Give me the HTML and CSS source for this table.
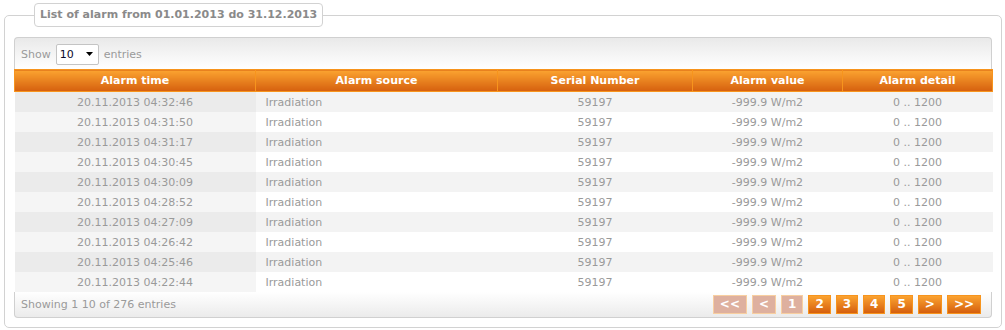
FILE: index.html
```html
<!DOCTYPE html>
<html>
<head>
<meta charset="utf-8">
<link rel="stylesheet" href="styles.css">
</head>
<body>
<div class="page">
<fieldset class="panel">
  <legend class="panel-title">List of alarm from 01.01.2013 do 31.12.2013</legend>
  <div class="dt">
    <div class="dt-top">
      <span class="lbl">Show</span>
      <span class="select"><span class="select-val">10</span><svg class="caret" width="7" height="4" viewBox="0 0 7 4"><path d="M0 0H7L3.5 4Z" fill="#000"/></svg></span>
      <span class="lbl">entries</span>
    </div>
    <table class="grid">
      <colgroup>
        <col class="c1"><col class="c2"><col class="c3"><col class="c4"><col class="c5">
      </colgroup>
      <thead>
        <tr><th>Alarm time</th><th>Alarm source</th><th>Serial Number</th><th>Alarm value</th><th>Alarm detail</th></tr>
      </thead>
      <tbody>
        <tr><td class="sorted">20.11.2013 04:32:46</td><td class="left">Irradiation</td><td>59197</td><td>-999.9 W/m2</td><td>0 .. 1200</td></tr>
        <tr><td class="sorted">20.11.2013 04:31:50</td><td class="left">Irradiation</td><td>59197</td><td>-999.9 W/m2</td><td>0 .. 1200</td></tr>
        <tr><td class="sorted">20.11.2013 04:31:17</td><td class="left">Irradiation</td><td>59197</td><td>-999.9 W/m2</td><td>0 .. 1200</td></tr>
        <tr><td class="sorted">20.11.2013 04:30:45</td><td class="left">Irradiation</td><td>59197</td><td>-999.9 W/m2</td><td>0 .. 1200</td></tr>
        <tr><td class="sorted">20.11.2013 04:30:09</td><td class="left">Irradiation</td><td>59197</td><td>-999.9 W/m2</td><td>0 .. 1200</td></tr>
        <tr><td class="sorted">20.11.2013 04:28:52</td><td class="left">Irradiation</td><td>59197</td><td>-999.9 W/m2</td><td>0 .. 1200</td></tr>
        <tr><td class="sorted">20.11.2013 04:27:09</td><td class="left">Irradiation</td><td>59197</td><td>-999.9 W/m2</td><td>0 .. 1200</td></tr>
        <tr><td class="sorted">20.11.2013 04:26:42</td><td class="left">Irradiation</td><td>59197</td><td>-999.9 W/m2</td><td>0 .. 1200</td></tr>
        <tr><td class="sorted">20.11.2013 04:25:46</td><td class="left">Irradiation</td><td>59197</td><td>-999.9 W/m2</td><td>0 .. 1200</td></tr>
        <tr><td class="sorted">20.11.2013 04:22:44</td><td class="left">Irradiation</td><td>59197</td><td>-999.9 W/m2</td><td>0 .. 1200</td></tr>
      </tbody>
    </table>
    <div class="dt-bottom">
      <span class="info">Showing 1 10 of 276 entries</span>
      <div class="pager">
        <span class="pg off">&lt;&lt;</span>
        <span class="pg off">&lt;</span>
        <span class="pg off">1</span>
        <span class="pg">2</span>
        <span class="pg">3</span>
        <span class="pg">4</span>
        <span class="pg">5</span>
        <span class="pg">&gt;</span>
        <span class="pg">&gt;&gt;</span>
      </div>
    </div>
  </div>
</fieldset>
</div>
</body>
</html>
```
FILE: styles.css
```css
html, body {
  margin: 0;
  padding: 0;
  background: #fff;
}
body {
  font-family: "DejaVu Sans", Verdana, sans-serif;
  font-size: 11px;
  color: #9a9a9a;
}
.page {
  padding: 3px 3px 0 4px;
}
.panel {
  margin: 0;
  border: 1px solid #d2d2d2;
  border-radius: 5px;
  padding: 10px 9px 9px 9px;
  min-width: 0;
}
.panel-title {
  margin-left: 20px;
  padding: 0 5px;
  border: 1px solid #d2d2d2;
  border-radius: 4px;
  height: 22px;
  line-height: 22px;
  font-weight: bold;
  font-size: 11px;
  color: #8a8a8a;
  background: #fff;
}
.dt {
  display: flex;
  flex-direction: column;
}
.dt-top {
  height: 30px;
  border: 1px solid #d0d0d0;
  border-bottom: 0;
  border-radius: 4px 4px 0 0;
  background: linear-gradient(#e9e9e9, #ffffff);
  display: flex;
  align-items: center;
  gap: 5px;
  padding: 1px 6px 0 6px;
}
.select {
  box-sizing: border-box;
  width: 43px;
  height: 21px;
  border: 1px solid #c4c4c4;
  border-radius: 2px;
  background: #fff;
  display: flex;
  align-items: center;
  justify-content: space-between;
  padding: 0 5px 0 3px;
  color: #0a0a2a;
}
.caret {
  display: block;
}
.grid {
  width: 100%;
  border-collapse: collapse;
  table-layout: fixed;
}
.c1 { width: 241px; }
.c2 { width: 242px; }
.c3 { width: 195px; }
.c4 { width: 150px; }
.c5 { width: 150px; }
.grid th {
  height: 21px;
  padding: 0;
  border: 1px solid #f7941d;
  background: linear-gradient(#fba330, #d55f0e);
  color: #fff;
  font-weight: bold;
  font-size: 11px;
  text-align: center;
}
.grid td {
  height: 20px;
  padding: 0;
  text-align: center;
  white-space: nowrap;
}
.grid td.left {
  text-align: left;
  padding-left: 10px;
}
.grid tbody tr:nth-child(odd) td { background: #f3f3f3; }
.grid tbody tr:nth-child(odd) td.sorted { background: #ebebeb; }
.grid tbody tr:nth-child(even) td { background: #ffffff; }
.grid tbody tr:nth-child(even) td.sorted { background: #f5f5f5; }
.dt-bottom {
  height: 25px;
  border: 1px solid #d0d0d0;
  border-top: 0;
  border-radius: 0 0 4px 4px;
  background: linear-gradient(#ffffff, #ebebeb);
  display: flex;
  align-items: center;
  justify-content: space-between;
  padding: 0 10px 0 6px;
}
.pager {
  display: flex;
  gap: 5px;
}
.pg {
  box-sizing: border-box;
  height: 19px;
  line-height: 17px;
  padding: 0 6px;
  border: 1px solid #f7941d;
  background: linear-gradient(#fba330, #d55f0e);
  color: #fff;
  font-weight: bold;
  font-size: 12px;
  text-align: center;
}
.pg.off {
  border-color: #f8cfa0;
  background: #deb09f;
}
```
